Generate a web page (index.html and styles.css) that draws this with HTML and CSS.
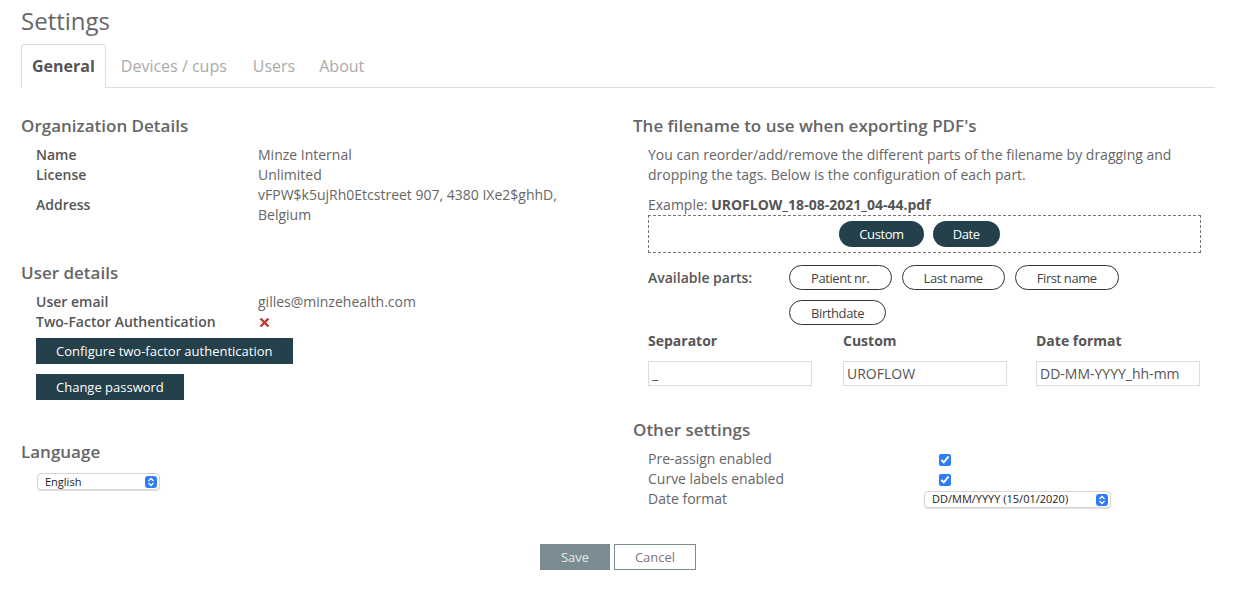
FILE: index.html
```html
<!DOCTYPE html>
<html lang="en">
<head>
  <meta charset="UTF-8">
  <title>Settings</title>
  <link rel="stylesheet" href="styles.css">
</head>
<body>
  <div class="page">
    <h1 class="title">Settings</h1>
    <div class="tabs">
      <div class="tab active">General</div>
      <div class="tab">Devices / cups</div>
      <div class="tab">Users</div>
      <div class="tab">About</div>
    </div>

    <div class="columns">
      <div class="col-left">
        <h3>Organization Details</h3>
        <div class="details">
          <div class="label">Name</div><div class="value">Minze Internal</div>
          <div class="label">License</div><div class="value">Unlimited</div>
          <div class="label">Address</div><div class="value">vFPW$k5ujRh0Etcstreet 907, 4380 IXe2$ghhD,<br>Belgium</div>
        </div>

        <h3 class="spaced">User details</h3>
        <div class="details">
          <div class="label">User email</div><div class="value">gilles@minzehealth.com</div>
          <div class="label">Two-Factor Authentication</div>
          <div class="value">
            <svg class="cross" width="11" height="11" viewBox="0 0 11 11"><path d="M1.5 1.5 L9.5 9.5 M9.5 1.5 L1.5 9.5" stroke="#c0392b" stroke-width="2.4" fill="none"/></svg>
          </div>
        </div>
        <div class="actions">
          <button class="btn-dark">Configure two-factor authentication</button>
          <button class="btn-dark">Change password</button>
        </div>

        <h3 class="spaced lang">Language</h3>
        <div class="fake-select lang-select">
          <span>English</span>
          <span class="stepper"><svg width="8" height="10" viewBox="0 0 8 10"><path d="M1.5 4 L4 1.5 L6.5 4 M1.5 6 L4 8.5 L6.5 6" stroke="#fff" stroke-width="1.3" fill="none"/></svg></span>
        </div>
      </div>

      <div class="col-right">
        <h3>The filename to use when exporting PDF's</h3>
        <div class="indent">
          <p class="help">You can reorder/add/remove the different parts of the filename by dragging and dropping the tags. Below is the configuration of each part.</p>
          <div class="example">Example: <b>UROFLOW_18-08-2021_04-44.pdf</b></div>
          <div class="dropzone">
            <span class="tag filled">Custom</span>
            <span class="tag filled">Date</span>
          </div>
          <div class="parts">
            <div class="parts-label">Available parts:</div>
            <div class="parts-list">
              <span class="tag outline">Patient nr.</span>
              <span class="tag outline">Last name</span>
              <span class="tag outline">First name</span>
              <span class="tag outline">Birthdate</span>
            </div>
          </div>
          <div class="fields">
            <div class="field"><div class="field-label">Separator</div><input type="text" value="_"></div>
            <div class="field"><div class="field-label">Custom</div><input type="text" value="UROFLOW"></div>
            <div class="field"><div class="field-label">Date format</div><input type="text" value="DD-MM-YYYY_hh-mm"></div>
          </div>
        </div>

        <h3 class="other">Other settings</h3>
        <div class="indent other-grid">
          <div>Pre-assign enabled</div><div><input type="checkbox" checked></div>
          <div>Curve labels enabled</div><div><input type="checkbox" checked></div>
          <div>Date format</div>
          <div>
            <div class="fake-select date-select">
              <span>DD/MM/YYYY (15/01/2020)</span>
              <span class="stepper"><svg width="8" height="10" viewBox="0 0 8 10"><path d="M1.5 4 L4 1.5 L6.5 4 M1.5 6 L4 8.5 L6.5 6" stroke="#fff" stroke-width="1.3" fill="none"/></svg></span>
            </div>
          </div>
        </div>
      </div>
    </div>

    <div class="footer">
      <button class="btn-save">Save</button>
      <button class="btn-cancel">Cancel</button>
    </div>
  </div>
</body>
</html>
```

FILE: styles.css
```css
body {
  margin: 0;
  font-family: 'Open Sans', 'Liberation Sans', Arial, sans-serif;
  font-size: 14px;
  color: #666;
  background: #fff;
}
.page {
  width: 1194px;
  padding-left: 21px;
}
.title {
  font-size: 24px;
  font-weight: 400;
  line-height: 32px;
  margin: 5px 0 7px 0;
  color: #666;
}
.tabs {
  display: flex;
  border-bottom: 1px solid #ddd;
  height: 43px;
}
.tab {
  padding: 0 12px;
  line-height: 43px;
  font-size: 16px;
  color: #aaa;
  border: 1px solid transparent;
  border-bottom: none;
}
.tab:nth-child(2) {
  padding-left: 14px;
}
.tab:nth-child(4) {
  padding-left: 10px;
}
.tab.active {
  padding: 0 10px;
  color: #555;
  font-weight: 700;
  border-color: #ddd;
  border-radius: 4px 4px 0 0;
  background: #fff;
  height: 43px;
}
.columns {
  display: grid;
  grid-template-columns: 612px 582px;
  margin-top: 26px;
}
h3 {
  font-size: 17px;
  font-weight: 600;
  line-height: 24px;
  margin: 0 0 7px 0;
  color: #666;
}
h3.spaced {
  margin-top: 36px;
}
h3.lang {
  margin-top: 40px;
  margin-bottom: 9px;
}
.details {
  display: grid;
  grid-template-columns: 222px 1fr;
  align-items: center;
  padding-left: 15px;
  line-height: 20px;
}
.label {
  font-weight: 600;
  color: #555;
}
.value {
  display: flex;
  align-items: center;
  min-height: 20px;
}
.cross {
  margin-left: 1px;
}
.actions {
  padding-left: 15px;
  display: flex;
  flex-direction: column;
  align-items: flex-start;
  gap: 10px;
  margin-top: 6px;
}
.btn-dark {
  background: #24404b;
  color: #fff;
  border: none;
  height: 26px;
  padding: 0 20px;
  font-family: inherit;
  font-size: 13px;
}
.fake-select {
  position: relative;
  display: flex;
  align-items: center;
  height: 17px;
  border: 1px solid #d4d4d4;
  border-radius: 4px;
  box-shadow: 0 1px 1px rgba(0,0,0,0.12);
  background: #fff;
  font-size: 11px;
  color: #222;
  box-sizing: border-box;
  padding-left: 7px;
}
.lang-select {
  margin-left: 16px;
  width: 123px;
}
.date-select {
  width: 187px;
}
.stepper {
  position: absolute;
  right: 2px;
  top: 2px;
  width: 12px;
  height: 12px;
  border-radius: 3px;
  background: #2f7cf6;
  display: flex;
  align-items: center;
  justify-content: center;
}
.indent {
  padding-left: 15px;
}
.help {
  margin: 0;
  line-height: 20px;
  width: 540px;
}
.example {
  line-height: 20px;
  margin-top: 10px;
}
.example b {
  color: #555;
}
.dropzone {
  border: 1px dashed #777;
  width: 553px;
  box-sizing: border-box;
  padding: 5px 10px 5px 0;
  display: flex;
  justify-content: center;
  gap: 9px;
}
.tag {
  display: inline-flex;
  align-items: center;
  justify-content: center;
  box-sizing: border-box;
  font-size: 13px;
  letter-spacing: -0.4px;
}
.tag.filled {
  background: #24404b;
  color: #fff;
  height: 26px;
  border-radius: 13px;
  padding: 0 20px;
}
.tag.outline {
  border: 1px solid #333;
  color: #444;
  height: 25px;
  border-radius: 13px;
  padding: 0 21px;
}
.parts {
  display: flex;
  margin-top: 12px;
}
.parts-label {
  width: 141px;
  font-weight: 600;
  color: #555;
  line-height: 25px;
}
.parts-list {
  display: flex;
  flex-wrap: wrap;
  gap: 10px;
  width: 380px;
}
.fields {
  display: grid;
  grid-template-columns: 195px 193px 195px;
  margin-top: 6px;
}
.field-label {
  font-weight: 700;
  color: #555;
  font-size: 14px;
  line-height: 20px;
  margin-bottom: 10px;
}
.field input {
  width: 164px;
  height: 25px;
  box-sizing: border-box;
  border: 1px solid #ddd;
  padding: 0 3px;
  font-family: inherit;
  font-size: 14px;
  color: #555;
}
.other {
  margin-top: 32px;
}
.other-grid {
  display: grid;
  grid-template-columns: 276px 1fr;
  align-items: center;
  line-height: 20px;
}
.other-grid input[type=checkbox] {
  margin: 0 0 0 15px;
  width: 12px;
  height: 12px;
  accent-color: #2f7cf6;
  vertical-align: middle;
}
.footer {
  display: flex;
  justify-content: center;
  gap: 4px;
  margin-top: 35px;
}
.btn-save {
  width: 70px;
  height: 26px;
  border: none;
  background: #7a8c92;
  color: #e6eaeb;
  font-family: inherit;
  font-size: 13px;
}
.btn-cancel {
  width: 82px;
  height: 26px;
  border: 1px solid #7a8c92;
  background: #fff;
  color: #777;
  font-family: inherit;
  font-size: 13px;
}
```
